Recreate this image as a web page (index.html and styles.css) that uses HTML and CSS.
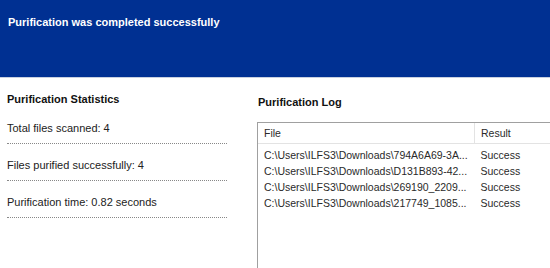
FILE: index.html
```html
<html>
<head>
    <link rel="stylesheet" href="styles.css">
</head>
<body>
    <div class="banner">
        <h1>Purification was completed successfully</h1>
    </div>
    <div class="content">
        <div class="stats">
            <h2>Purification Statistics</h2>
            <div class="stat">Total files scanned: 4</div>
            <div class="stat">Files purified successfully: 4</div>
            <div class="stat">Purification time: 0.82 seconds</div>
        </div>
        <div class="log">
            <h2>Purification Log</h2>
            <div class="list">
                <table class="log-table">
                    <thead>
                        <tr>
                            <th class="col-file">File</th>
                            <th class="col-result">Result</th>
                        </tr>
                    </thead>
                    <tbody>
                        <tr><td>C:\Users\ILFS3\Downloads\794A6A69-3A...</td><td>Success</td></tr>
                        <tr><td>C:\Users\ILFS3\Downloads\D131B893-42...</td><td>Success</td></tr>
                        <tr><td>C:\Users\ILFS3\Downloads\269190_2209...</td><td>Success</td></tr>
                        <tr><td>C:\Users\ILFS3\Downloads\217749_1085...</td><td>Success</td></tr>
                    </tbody>
                </table>
            </div>
        </div>
    </div>
</body>
</html>
```

FILE: styles.css
```css
body {
    font-family: "Liberation Sans", Arial, sans-serif;
    font-size: 11px;
    color: #222;
    background-color: #fff;
    margin: 0;
    padding: 0;
    height: 268px;
    overflow: hidden;
}
.banner {
    height: 78px;
    background-color: #003092;
    border-bottom: 1px solid #c8d0e0;
    box-sizing: border-box;
    padding: 16px 8px;
}
h1 {
    margin: 0;
    font-size: 11px;
    font-weight: bold;
    color: #fff;
}
.content {
    display: flex;
    padding-top: 15px;
}
h2 {
    margin: 0;
    font-size: 11px;
    font-weight: bold;
    color: #111;
}
.stats {
    flex: none;
    width: 220px;
    padding-left: 7px;
}
.stats h2 {
    margin-bottom: 17px;
}
.stat {
    padding-bottom: 9px;
    margin-bottom: 15px;
    border-bottom: 1px dotted #888;
}
.log {
    flex: 1;
    margin-left: 30px;
}
.log h2 {
    margin-top: 3px;
    margin-left: 1px;
    margin-bottom: 14px;
}
.list {
    height: 147px;
    border-left: 1px solid #a0a0a0;
    border-top: 1px solid #a0a0a0;
}
.log-table {
    width: 100%;
    border-collapse: collapse;
    font-size: 10.5px;
    color: #2a2a2a;
}
.log-table th {
    height: 20px;
    font-weight: normal;
    text-align: left;
    padding: 0 6px;
    border-bottom: 1px solid #e3e3e3;
}
.log-table th.col-file {
    width: 204px;
    border-right: 1px solid #e3e3e3;
}
.log-table td {
    height: 16px;
    padding: 0 6px;
    white-space: nowrap;
}
.log-table tbody tr:first-child td {
    height: 20px;
    padding-top: 4px;
}
```
